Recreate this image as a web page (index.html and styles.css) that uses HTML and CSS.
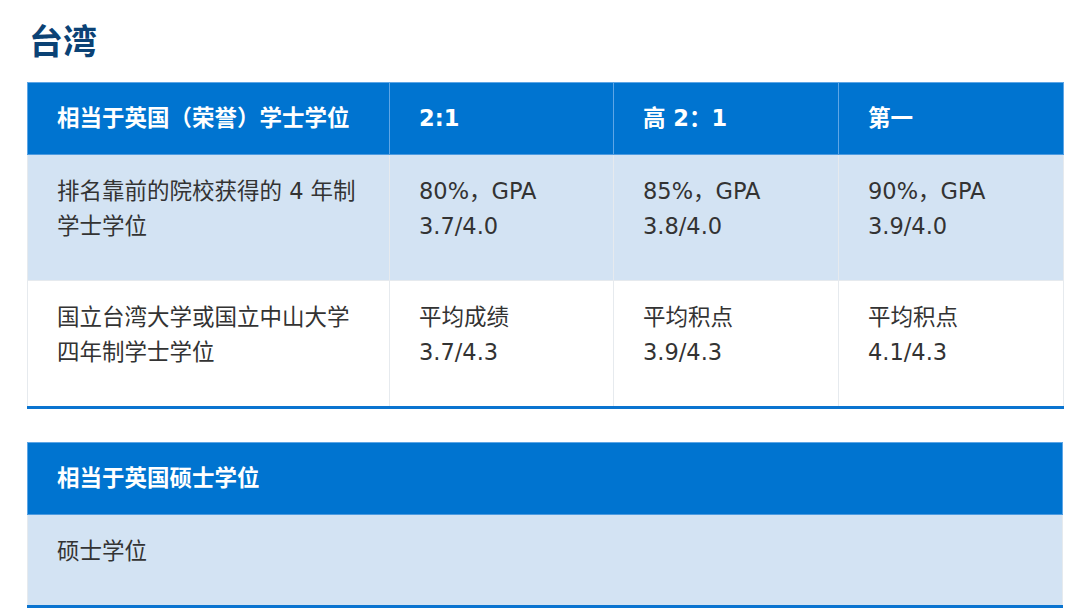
FILE: index.html
```html
<!DOCTYPE html>
<html lang="zh-CN">
<head>
<meta charset="utf-8">
<link rel="stylesheet" href="styles.css">
</head>
<body>
<div class="page">
  <h1 class="title">台湾</h1>
  <table class="grade-table">
    <colgroup>
      <col class="c1"><col class="c2"><col class="c3"><col class="c4">
    </colgroup>
    <thead>
      <tr>
        <th>相当于英国（荣誉）学士学位</th>
        <th>2:1</th>
        <th>高 2：1</th>
        <th>第一</th>
      </tr>
    </thead>
    <tbody>
      <tr class="alt">
        <td>排名靠前的院校获得的 4 年制<br>学士学位</td>
        <td>80%，GPA<br>3.7/4.0</td>
        <td>85%，GPA<br>3.8/4.0</td>
        <td>90%，GPA<br>3.9/4.0</td>
      </tr>
      <tr>
        <td>国立台湾大学或国立中山大学<br>四年制学士学位</td>
        <td>平均成绩<br>3.7/4.3</td>
        <td>平均积点<br>3.9/4.3</td>
        <td>平均积点<br>4.1/4.3</td>
      </tr>
    </tbody>
  </table>
  <table class="grade-table second">
    <thead>
      <tr><th>相当于英国硕士学位</th></tr>
    </thead>
    <tbody>
      <tr class="alt"><td>硕士学位</td></tr>
    </tbody>
  </table>
</div>
</body>
</html>
```
FILE: styles.css
```css
html, body {
  margin: 0;
  padding: 0;
  background: #ffffff;
}
.page {
  padding: 20px 0 0 27px;
  font-family: "DejaVu Sans", "Noto Sans CJK SC", sans-serif;
}
.title {
  margin: 0 0 22px 2px;
  font-size: 34px;
  line-height: 40px;
  font-weight: 700;
  color: #0b4275;
  font-family: "Noto Sans CJK SC", sans-serif;
}
.grade-table {
  width: 1036px;
  border-collapse: collapse;
  table-layout: fixed;
  border-bottom: 3px solid #0a74d0;
}
.grade-table col.c1 { width: 362px; }
.grade-table col.c2 { width: 224px; }
.grade-table col.c3 { width: 225px; }
.grade-table col.c4 { width: 225px; }
.grade-table th {
  background: #0074d0;
  color: #ffffff;
  font-size: 22.5px;
  font-weight: 700;
  line-height: 35px;
  text-align: left;
  padding: 18px 29px 18px 29px;
  border: 1px solid #5ea6e6;
  border-bottom: 1px solid #4d9be0;
}
.grade-table td {
  font-size: 22.5px;
  line-height: 35px;
  color: #333333;
  text-align: left;
  vertical-align: top;
  padding: 19px 29px 36px 29px;
  border: 1px solid #e6eaee;
  border-bottom: none;
}
.grade-table tr.alt td {
  background: #d3e3f3;
}
.second {
  margin-top: 33px;
}
```
